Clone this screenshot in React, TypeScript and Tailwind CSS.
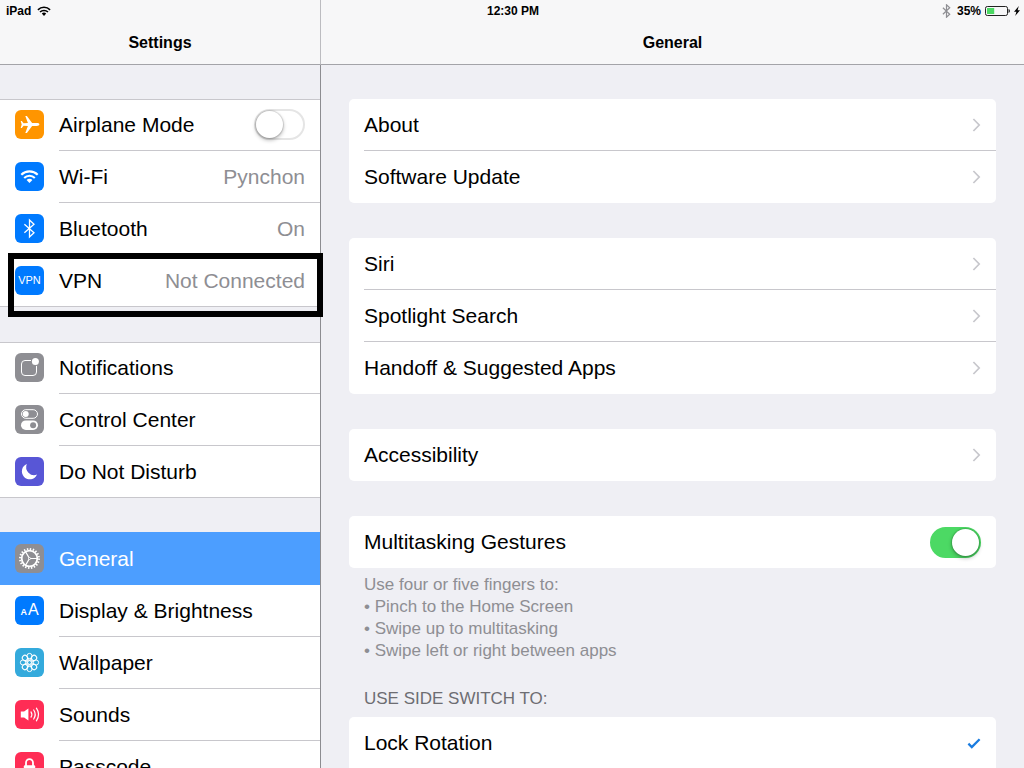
import React, { useState } from 'react';

type IconProps = { children: React.ReactNode; color: string };

const IconTile: React.FC<IconProps> = ({ children, color }) => (
  <span className={`flex size-[29px] shrink-0 items-center justify-center overflow-hidden rounded-md text-white ${color}`}>
    {children}
  </span>
);

const Glyph: React.FC<{ children: React.ReactNode }> = ({ children }) => (
  <svg viewBox="0 0 29 29" className="size-[29px]" fill="none" stroke="none" aria-hidden="true">
    {children}
  </svg>
);

const AirplaneIcon = () => (
  <IconTile color="bg-[#ff9500]">
    <Glyph>
      <path
        fill="currentColor"
        d="M24.4 14.5c0-.9-1.3-1.4-2.6-1.4h-4.7L11.9 6h-1.6l2.6 7.1-4.3.2-1.8-2.4H5.7l1 3.6-1 3.6h1.1l1.8-2.4 4.3.2L10.3 23h1.6l5.2-7.1h4.7c1.3 0 2.6-.5 2.6-1.4z"
      />
    </Glyph>
  </IconTile>
);

const WifiIcon = () => (
  <IconTile color="bg-[#007aff]">
    <Glyph>
      <path stroke="currentColor" strokeWidth="2.1" d="M6.3 12.8a11.6 11.6 0 0 1 16.4 0M9.2 15.9a7.5 7.5 0 0 1 10.6 0" />
      <path fill="currentColor" d="M14.5 21l-2.9-3a4 4 0 0 1 5.8 0z" />
    </Glyph>
  </IconTile>
);

const BluetoothIcon = () => (
  <IconTile color="bg-[#007aff]">
    <Glyph>
      <path stroke="currentColor" strokeWidth="1.3" d="M9.4 10.2l9.6 8.6-4.5 4.2V6l4.5 4.2-9.6 8.6" />
    </Glyph>
  </IconTile>
);

const VpnIcon = () => (
  <IconTile color="bg-[#007aff]">
    <span className="text-[11px]">VPN</span>
  </IconTile>
);

const NotificationsIcon = () => (
  <IconTile color="bg-[#8e8e93]">
    <Glyph>
      <rect x="6.5" y="7.5" width="15" height="15" rx="3.5" stroke="currentColor" />
      <circle cx="20.4" cy="8.6" r="4.6" fill="#8e8e93" />
      <circle cx="20.4" cy="8.6" r="3.5" fill="currentColor" />
    </Glyph>
  </IconTile>
);

const ControlCenterIcon = () => (
  <IconTile color="bg-[#8e8e93]">
    <Glyph>
      <rect x="6.5" y="4.7" width="16" height="8.6" rx="4.3" stroke="currentColor" />
      <circle cx="10.7" cy="9" r="3" fill="currentColor" />
      <rect x="6" y="15.4" width="17" height="9.6" rx="4.8" fill="currentColor" />
      <circle cx="18.1" cy="20.2" r="3" fill="#8e8e93" />
    </Glyph>
  </IconTile>
);

const MoonIcon = () => (
  <IconTile color="bg-[#5856d6]">
    <Glyph>
      <path fill="currentColor" d="M11.8 7.1A7.9 7.9 0 1 0 22 17.6 8 8 0 0 1 11.8 7.1z" />
    </Glyph>
  </IconTile>
);

const GearIcon = () => (
  <IconTile color="bg-[#8e8e93]">
    <Glyph>
      <g stroke="currentColor">
        <circle cx="14.5" cy="14.5" r="9.5" strokeWidth="2" strokeDasharray="1.45 1.535" />
        <circle cx="14.5" cy="14.5" r="7.8" strokeWidth="1.8" />
        <circle cx="14.5" cy="14.5" r="1" strokeWidth="1" />
        <path strokeWidth="1.1" d="M15.5 14.5h7M14 13.6l-3.5-6M14 15.4l-3.5 6" />
      </g>
    </Glyph>
  </IconTile>
);

const DisplayIcon = () => (
  <IconTile color="bg-[#007aff]">
    <span className="flex items-baseline gap-px pb-0.5 leading-none">
      <span className="text-[9px] font-bold">A</span>
      <span className="text-base leading-none">A</span>
    </span>
  </IconTile>
);

const PETALS = [0, 45, 90, 135, 180, 225, 270, 315];

const WallpaperIcon = () => (
  <IconTile color="bg-[#34aadc]">
    <Glyph>
      <g stroke="currentColor">
        {PETALS.map((angle) => (
          <g key={angle} transform={`rotate(${angle} 14.5 14.5)`}>
            <circle cx="14.5" cy="8" r="2.6" />
            <path d="M14.5 12.6L12.9 10M14.5 12.6l1.6-2.6" />
          </g>
        ))}
        <circle cx="14.5" cy="14.5" r="1.9" />
      </g>
    </Glyph>
  </IconTile>
);

const SoundsIcon = () => (
  <IconTile color="bg-[#ff2d55]">
    <Glyph>
      <path fill="currentColor" d="M5.8 11.6h3.3l4.3-3.2v12.2l-4.3-3.2H5.8z" />
      <path
        stroke="currentColor"
        strokeWidth="1.2"
        strokeLinecap="round"
        d="M16 11.9a4.8 4.8 0 0 1 0 5.2M18.7 10a8 8 0 0 1 0 9M21.4 8.2a11 11 0 0 1 0 12.6"
      />
    </Glyph>
  </IconTile>
);

const PasscodeIcon = () => (
  <IconTile color="bg-[#ff2d55]">
    <Glyph>
      <path stroke="currentColor" strokeWidth="1.8" d="M11 14v-3.3a3.5 3.5 0 0 1 7 0V14" />
      <rect x="8.8" y="13.2" width="11.4" height="9" rx="1.2" fill="currentColor" />
    </Glyph>
  </IconTile>
);

const Chevron = () => (
  <svg viewBox="0 0 9 14" className="h-3.5 w-[9px] shrink-0" fill="none" stroke="#c7c7cc" strokeWidth="1.7" aria-hidden="true">
    <path d="M1.4 1l5.8 6-5.8 6" />
  </svg>
);

interface SwitchProps {
  id: string;
  checked: boolean;
  onChange: (value: boolean) => void;
}

const Switch: React.FC<SwitchProps> = ({ id, checked, onChange }) => (
  <input
    id={id}
    type="checkbox"
    role="switch"
    checked={checked}
    onChange={(e) => onChange(e.target.checked)}
    className="flex h-[31px] w-[51px] shrink-0 appearance-none items-center rounded-full border-2 border-[#e5e5e5] bg-white before:block before:size-[27px] before:rounded-full before:bg-white before:shadow-[0_2px_4px_rgba(0,0,0,0.3),0_0_1px_1px_rgba(0,0,0,0.12)] before:content-[''] checked:justify-end checked:border-[#4cd964] checked:bg-[#4cd964]"
  />
);

interface SidebarItem {
  label: string;
  icon: React.ReactNode;
  value?: string;
  selected?: boolean;
}

const connections: SidebarItem[] = [
  { label: 'Wi-Fi', icon: <WifiIcon />, value: 'Pynchon' },
  { label: 'Bluetooth', icon: <BluetoothIcon />, value: 'On' },
  { label: 'VPN', icon: <VpnIcon />, value: 'Not Connected' },
];

const alerts: SidebarItem[] = [
  { label: 'Notifications', icon: <NotificationsIcon /> },
  { label: 'Control Center', icon: <ControlCenterIcon /> },
  { label: 'Do Not Disturb', icon: <MoonIcon /> },
];

const device: SidebarItem[] = [
  { label: 'General', icon: <GearIcon />, selected: true },
  { label: 'Display & Brightness', icon: <DisplayIcon /> },
  { label: 'Wallpaper', icon: <WallpaperIcon /> },
  { label: 'Sounds', icon: <SoundsIcon /> },
  { label: 'Passcode', icon: <PasscodeIcon /> },
];

const SidebarGroup: React.FC<{ children: React.ReactNode }> = ({ children }) => (
  <div className="bg-white shadow-[inset_0_1px_0_#c8c7cc]">{children}</div>
);

const rowClass = 'group flex h-[52px] items-stretch gap-[15px] border-[#c8c7cc] pl-[15px] last:border-b';
const rowIconClass = 'flex items-start pt-[11px]';
const rowBodyClass =
  'flex min-w-0 flex-1 items-center justify-between border-b border-[#c8c7cc] pr-[15px] group-last:border-b-0';

const SidebarRow: React.FC<{ item: SidebarItem }> = ({ item }) => (
  <a
    href="#"
    aria-current={item.selected ? 'page' : undefined}
    className={`${rowClass} ${item.selected ? '-mt-px box-content bg-[#4c9eff] pt-px text-white' : ''}`}
  >
    <span className={rowIconClass}>{item.icon}</span>
    <span className={`${rowBodyClass} ${item.selected ? 'border-transparent' : ''}`}>
      <span>{item.label}</span>
      {item.value && <span className="text-[#8e8e93]">{item.value}</span>}
    </span>
  </a>
);

const Card: React.FC<{ children: React.ReactNode; open?: boolean }> = ({ children, open }) => (
  <div className={`bg-white ${open ? 'rounded-t-[5px]' : 'rounded-[5px]'}`}>{children}</div>
);

const LinkCard: React.FC<{ items: string[] }> = ({ items }) => (
  <Card>
    {items.map((item) => (
      <a key={item} href="#" className="group block pl-[15px]">
        <span className="flex h-[52px] items-center justify-between border-b border-[#c8c7cc] pr-[15px] group-last:border-transparent">
          {item}
          <Chevron />
        </span>
      </a>
    ))}
  </Card>
);

const StatusBar = () => (
  <div className="absolute inset-x-0 top-0 grid h-[22px] grid-cols-3 items-center pr-1 pl-1.5 text-xs font-bold">
    <div className="flex items-center gap-1.5">
      iPad
      <svg viewBox="0 0 14 10" className="h-2.5 w-3.5" fill="none" aria-label="Wi-Fi">
        <path stroke="#000" strokeWidth="1.5" d="M.9 3.9a8.6 8.6 0 0 1 12.2 0M3 6.1a5.6 5.6 0 0 1 8 0" />
        <path fill="#000" d="M7 9.9L4.8 7.6a3.1 3.1 0 0 1 4.4 0z" />
      </svg>
    </div>
    <div className="text-center">12:30 PM</div>
    <div className="flex items-center justify-end gap-1">
      <svg viewBox="0 0 9 14" className="mr-0.5 h-3.5 w-[9px]" fill="none" stroke="#8e8e93" strokeWidth="1.2" aria-label="Bluetooth">
        <path d="M.9 3.8l6.8 6.4-3.2 3V.8l3.2 3L.9 10.2" />
      </svg>
      35%
      <svg viewBox="0 0 25 10" className="h-2.5 w-[25px]" fill="none" aria-label="Battery">
        <rect x=".5" y=".5" width="22" height="9" rx="1.8" stroke="#222" />
        <rect x="2" y="2" width="7.2" height="6" fill="#4cd964" />
        <path fill="#222" d="M23.5 3.1c1 .3 1.4 1 1.4 1.9s-.4 1.6-1.4 1.9z" />
      </svg>
      <svg viewBox="0 0 6 10" className="h-2.5 w-1.5" aria-label="Charging">
        <path d="M4.8 0L0 5.8h2.4L1.2 10 6 4.2H3.6z" />
      </svg>
    </div>
  </div>
);

export default function App() {
  const [airplane, setAirplane] = useState(false);
  const [gestures, setGestures] = useState(true);

  return (
    <div className="relative flex h-screen overflow-hidden bg-[#efeff4] font-['Liberation_Sans',Arial,sans-serif] text-[21px] text-black">
      <aside className="flex w-[321px] shrink-0 flex-col">
        <header className="flex h-[65px] shrink-0 items-end justify-center border-r border-b border-r-[#bcbcc0] border-b-[#a3a3a8] bg-[#f7f7f8] pb-[9px]">
          <h1 className="text-base font-bold">Settings</h1>
        </header>
        <nav className="flex flex-1 flex-col gap-[35px] border-r border-[#8c8c90] pt-[34px]">
          <SidebarGroup>
            <label htmlFor="airplane" className={rowClass}>
              <span className={rowIconClass}>
                <AirplaneIcon />
              </span>
              <span className={rowBodyClass}>
                <span>Airplane Mode</span>
                <Switch id="airplane" checked={airplane} onChange={setAirplane} />
              </span>
            </label>
            {connections.map((item) => (
              <SidebarRow key={item.label} item={item} />
            ))}
          </SidebarGroup>
          <SidebarGroup>
            {alerts.map((item) => (
              <SidebarRow key={item.label} item={item} />
            ))}
          </SidebarGroup>
          <SidebarGroup>
            {device.map((item) => (
              <SidebarRow key={item.label} item={item} />
            ))}
          </SidebarGroup>
        </nav>
      </aside>

      <main className="flex min-w-0 flex-1 flex-col">
        <header className="flex h-[65px] shrink-0 items-end justify-center border-b border-[#a3a3a8] bg-[#f7f7f8] pb-[9px]">
          <h2 className="text-base font-bold">General</h2>
        </header>
        <div className="flex flex-col gap-[35px] px-7 pt-[34px]">
          <LinkCard items={['About', 'Software Update']} />
          <LinkCard items={['Siri', 'Spotlight Search', 'Handoff & Suggested Apps']} />
          <LinkCard items={['Accessibility']} />
          <section>
            <Card>
              <label htmlFor="gestures" className="flex h-[52px] items-center justify-between px-[15px]">
                Multitasking Gestures
                <Switch id="gestures" checked={gestures} onChange={setGestures} />
              </label>
            </Card>
            <div className="px-[15px] pt-1.5 text-[17px] leading-[22px] text-[#8e8e93]">
              <p>Use four or five fingers to:</p>
              <p>• Pinch to the Home Screen</p>
              <p>• Swipe up to multitasking</p>
              <p>• Swipe left or right between apps</p>
            </div>
            <h3 className="px-[15px] pt-[26px] pb-[7px] text-[17px] leading-[22px] text-[#6d6d72]">USE SIDE SWITCH TO:</h3>
            <Card open>
              <label className="flex h-[52px] items-center justify-between px-[15px]">
                Lock Rotation
                <input type="radio" name="side-switch" defaultChecked className="peer sr-only" />
                <svg
                  viewBox="0 0 14 11"
                  className="invisible h-[11px] w-3.5 peer-checked:visible"
                  fill="none"
                  stroke="#1a7ce0"
                  strokeWidth="2.3"
                  aria-hidden="true"
                >
                  <path d="M1.4 5.6l3.4 3.4L12.6 1.2" />
                </svg>
              </label>
            </Card>
          </section>
        </div>
      </main>

      <StatusBar />

      {/* highlight around the VPN row */}
      <div className="pointer-events-none absolute top-[253px] left-2 h-16 w-[315px] border-6 border-black" />
    </div>
  );
}
